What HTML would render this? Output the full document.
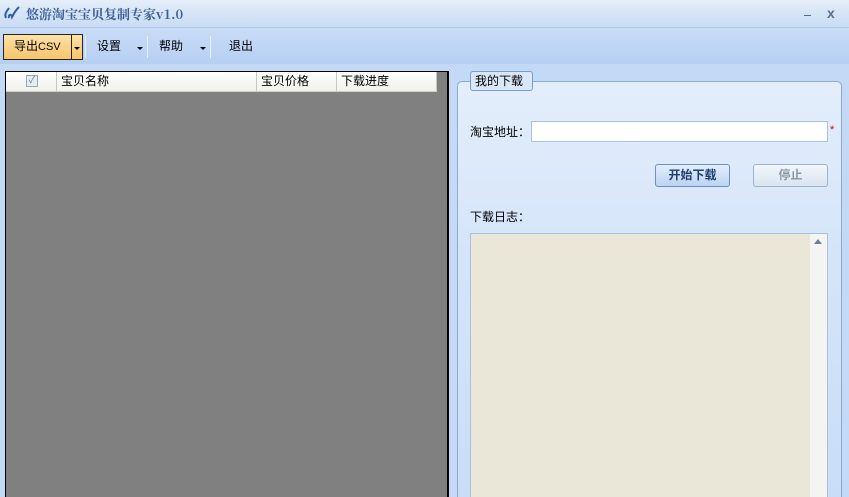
<!DOCTYPE html>
<html><head><meta charset="utf-8">
<style>
*{margin:0;padding:0;box-sizing:border-box}
html{width:849px;height:497px;overflow:hidden}
body{width:849px;height:497px;overflow:hidden;position:relative;background:#c4d9f6;font-family:"Liberation Sans","Noto Sans CJK SC","WenQuanYi Zen Hei",sans-serif;font-size:12px;color:#000}
.abs{position:absolute}
#title{left:0;top:0;width:849px;height:28px;background:linear-gradient(#e6eef9,#d6e4f6 50%,#cadcf3);border-bottom:1px solid #b0c8ea}
#title .t{left:26px;top:4px;font-family:"Noto Serif CJK SC",serif;font-weight:bold;font-size:13px;color:#3a5f95}
#tb{left:0;top:28px;width:849px;height:36px;background:linear-gradient(#c9dcf7,#b6cff3)}
.btn{top:6px;height:26px;line-height:24px}
.sep{top:8px;width:1px;height:22px;background:#8fb0dd;border-right:1px solid #e8f0fb}
.arr{width:0;height:0;border-left:3px solid transparent;border-right:3px solid transparent;border-top:3px solid #000}
#left{left:5px;top:71px;width:444px;height:426px;background:#808080;border:1px solid #000;border-right:2px solid #000;border-bottom:none}
#hdr{left:6px;top:72px;width:431px;height:20px;background:linear-gradient(#fff,#f0f0ec);border-bottom:1px solid #d0d0c8}
.hc{top:0;height:19px;line-height:18px;border-right:1px solid #c8c8c0;padding-left:4px}
#grp{left:457px;top:81px;width:385px;height:416px;border:1px solid #8fa9cf;border-bottom:none;border-radius:5px 5px 0 0;background:linear-gradient(#e4eefb,#d5e5f9 40%,#c9ddf8)}
#leg{left:470px;top:71px;width:63px;height:20px;border:1px solid #7a9cc9;border-radius:3px;background:#d9e7f9;line-height:18px;padding-left:4px}
</style></head><body>
<div id="title" class="abs">
<svg class="abs" style="left:3px;top:5px" width="18" height="16"><path d="M3 13 C1 9 4 6 6 3 M6 13 C5 10 8 8 9 12 C11 8 14 4 16 2" stroke="#2d5fa6" stroke-width="2" fill="none"/></svg>
<div class="abs t">悠游淘宝宝贝复制专家v1.0</div>
<div class="abs" style="left:804px;top:15px;width:7px;height:1px;background:#55698a"></div>
<div class="abs" style="left:827px;top:5px;font-size:14px;color:#5a6e8e;font-weight:bold">x</div>
</div>
<div id="tb" class="abs">
<div class="abs btn" style="left:3px;width:80px;background:linear-gradient(#fde1a8,#f8c56a);border:1px solid #262626;"></div>
<div class="abs" style="left:71px;top:6px;width:1px;height:26px;background:#262626"></div>
<div class="abs btn" style="left:14px;top:6px">导出<span style="font-size:11px">CSV</span></div>
<div class="abs arr" style="left:74px;top:19px"></div>
<div class="abs sep" style="left:85px"></div>
<div class="abs btn" style="left:97px">设置</div>
<div class="abs arr" style="left:137px;top:19px"></div>
<div class="abs sep" style="left:147px"></div>
<div class="abs btn" style="left:159px">帮助</div>
<div class="abs arr" style="left:200px;top:19px"></div>
<div class="abs sep" style="left:210px"></div>
<div class="abs btn" style="left:229px">退出</div>
</div>
<div id="left" class="abs"></div>
<div id="hdr" class="abs">
<div class="abs hc" style="left:0;width:51px"><div class="abs" style="left:20px;top:3px;width:12px;height:12px;border:1px solid #9aa8b8;background:#e8ecf0;font-size:10px;line-height:10px;text-align:center;color:#6a7a8a">✓</div></div>
<div class="abs hc" style="left:51px;width:200px">宝贝名称</div>
<div class="abs hc" style="left:251px;width:80px">宝贝价格</div>
<div class="abs hc" style="left:331px;width:100px">下载进度</div>
</div>
<div id="grp" class="abs"></div>
<div id="leg" class="abs">我的下载</div>
<div class="abs" style="left:470px;top:123px">淘宝地址：</div>
<div class="abs" style="left:531px;top:121px;width:297px;height:21px;background:#fff;border:1px solid #a9c0df"></div>
<div class="abs" style="left:830px;top:124px;color:#c00;font-size:11px">*</div>
<div class="abs" style="left:655px;top:164px;width:75px;height:23px;border:1px solid #6f8fbf;border-radius:3px;background:linear-gradient(#e3eefc,#bcd3f3);text-align:center;line-height:21px;font-weight:bold;color:#1e3e6e">开始下载</div>
<div class="abs" style="left:753px;top:164px;width:75px;height:23px;border:1px solid #9eb2cc;border-radius:3px;background:linear-gradient(#f2f6fb,#d9e4f1);text-align:center;line-height:21px;font-weight:bold;color:#8b97a6">停止</div>
<div class="abs" style="left:470px;top:208px">下载日志：</div>
<div class="abs" style="left:470px;top:233px;width:358px;height:264px;background:#ebe7d8;border:1px solid #a9c0df;border-bottom:none"></div>
<div class="abs" style="left:810px;top:234px;width:17px;height:263px;background:#f4f4f2"></div>
<div class="abs" style="left:814px;top:239px;width:0;height:0;border-left:4px solid transparent;border-right:4px solid transparent;border-bottom:5px solid #6d7f9a"></div>
</body></html>
